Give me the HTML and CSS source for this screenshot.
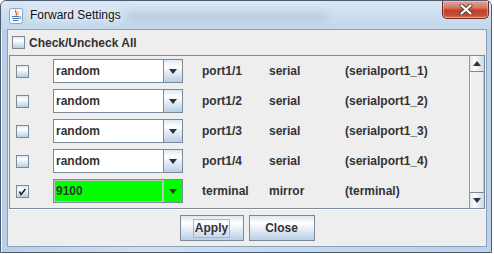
FILE: index.html
```html
<!DOCTYPE html>
<html lang="en">
<head>
    <meta charset="UTF-8">
    <title>Forward Settings</title>
    <link rel="stylesheet" href="styles.css">
</head>
<body>
    <div class="window">
        <!-- 标题栏 -->
        <div class="titlebar">
            <svg class="app-icon" width="14" height="16" viewBox="0 0 14 16">
                <rect x="0.5" y="0.5" width="13" height="15" rx="2" fill="#f4f8fc" stroke="#8ea6c0"/>
                <path d="M7 2 C5 4 9 5 7 7.5" fill="none" stroke="#e0622a" stroke-width="1.3"/>
                <path d="M9 3.5 C8 5 10 5.5 8.5 7" fill="none" stroke="#e88a3a" stroke-width="1"/>
                <path d="M3 8.5 H10.5 M3.5 10.5 H10 M4 12.5 H9.5" stroke="#4a78b0" stroke-width="1"/>
                <path d="M10.5 8.5 C12.5 8.5 12.5 11 10 11" fill="none" stroke="#4a78b0" stroke-width="0.9"/>
            </svg>
            <span class="title-text">Forward Settings</span>
            <div class="title-blur"></div>
            <div class="close-btn">
                <svg width="14" height="11" viewBox="0 0 14 11">
                    <path d="M2.5 1.5 L11.5 9.5 M11.5 1.5 L2.5 9.5" stroke="#5a3a36" stroke-width="4" stroke-linecap="round"/>
                    <path d="M2.5 1.5 L11.5 9.5 M11.5 1.5 L2.5 9.5" stroke="#ffffff" stroke-width="2.2" stroke-linecap="round"/>
                </svg>
            </div>
        </div>

        <div class="client">
            <div class="check-all">
                <span class="cb"></span>
                <span>Check/Uncheck All</span>
            </div>

            <div class="scrollpane">
                <div class="rows">
                    <div class="row">
                        <span class="cb"></span>
                        <div class="combo"><span class="combo-text">random</span><span class="combo-btn"><i class="arrow-down"></i></span></div>
                        <span>port1/1</span><span>serial</span><span>(serialport1_1)</span>
                    </div>
                    <div class="row">
                        <span class="cb"></span>
                        <div class="combo"><span class="combo-text">random</span><span class="combo-btn"><i class="arrow-down"></i></span></div>
                        <span>port1/2</span><span>serial</span><span>(serialport1_2)</span>
                    </div>
                    <div class="row">
                        <span class="cb"></span>
                        <div class="combo"><span class="combo-text">random</span><span class="combo-btn"><i class="arrow-down"></i></span></div>
                        <span>port1/3</span><span>serial</span><span>(serialport1_3)</span>
                    </div>
                    <div class="row">
                        <span class="cb"></span>
                        <div class="combo"><span class="combo-text">random</span><span class="combo-btn"><i class="arrow-down"></i></span></div>
                        <span>port1/4</span><span>serial</span><span>(serialport1_4)</span>
                    </div>
                    <div class="row">
                        <span class="cb checked">
                            <svg width="11" height="11" viewBox="0 0 11 11">
                                <path d="M2.5 5.5 L4 8.5 L8.5 3" fill="none" stroke="#222" stroke-width="1.6"/>
                            </svg>
                        </span>
                        <div class="combo green"><span class="combo-text">9100</span><span class="combo-btn"><i class="arrow-down"></i></span></div>
                        <span>terminal</span><span>mirror</span><span>(terminal)</span>
                    </div>
                </div>
                <!-- 滚动条 -->
                <div class="vscroll">
                    <div class="sbtn up"><i class="arrow-up"></i></div>
                    <div class="track"></div>
                    <div class="sbtn down"><i class="arrow-down"></i></div>
                </div>
            </div>

            <div class="actions">
                <button class="btn apply"><span class="focus">Apply</span></button>
                <button class="btn close">Close</button>
            </div>
        </div>
    </div>
</body>
</html>
```

FILE: styles.css
```css
/* 页面基础 */
body {
    margin: 0;
    background: #ffffff;
    font-family: "Liberation Sans", Arial, sans-serif;
}
/* 窗口外框 (Aero) */
.window {
    width: 492px;
    height: 253px;
    box-sizing: border-box;
    border: 1px solid #4b5b70;
    border-radius: 6px 6px 0 0;
    padding: 0 4px 5px 6px;
    display: flex;
    flex-direction: column;
    background: linear-gradient(90deg, #b9cfe8 0%, #cfe0f2 30%, #c4d8ee 60%, #bcd2ea 100%);
    box-shadow: inset 1px 1px 0 rgba(255,255,255,0.7);
}
/* 标题栏 */
.titlebar {
    height: 28px;
    margin: 0 -4px 0 -6px;
    display: flex;
    align-items: center;
    background: linear-gradient(180deg, #dbe8f5 0%, #cadcf0 60%, #c3d7ec 100%);
    border-radius: 5px 5px 0 0;
}
.app-icon {
    margin-left: 8px;
    margin-top: 1px;
}
.title-text {
    margin-left: 7px;
    font-size: 12px;
    color: #111;
    text-shadow: 0 0 6px #fff, 0 0 10px #fff;
}
.title-blur {
    width: 200px;
    height: 7px;
    margin-left: 6px;
    margin-top: 2px;
    background: rgba(95, 115, 145, 0.2);
    filter: blur(4px);
}
/* 关闭按钮 */
.close-btn {
    margin-left: auto;
    margin-right: 2px;
    align-self: flex-start;
    width: 45px;
    height: 17px;
    border: 1px solid #6e3026;
    border-top: none;
    border-radius: 0 0 5px 5px;
    background: linear-gradient(180deg, #e6a496 0%, #d47660 40%, #c0402a 55%, #c74e34 85%, #da7a5e 100%);
    box-shadow: inset 0 0 0 1px rgba(255,220,210,0.45);
    display: flex;
    align-items: center;
    justify-content: center;
}
/* 客户区 */
.client {
    height: 218px;
    box-sizing: border-box;
    border: 1px solid #8da2b9;
    background: #eeeeee;
    display: flex;
    flex-direction: column;
    color: #333333;
    font-size: 12px;
    font-weight: bold;
}
.check-all {
    height: 25px;
    padding-left: 4px;
    display: flex;
    align-items: center;
    gap: 4px;
}
/* 复选框 */
.cb {
    width: 13px;
    height: 13px;
    box-sizing: border-box;
    border: 1px solid #7a8a99;
    background: linear-gradient(180deg, #dde8f3 0%, #ffffff 30%, #b8cfe5 100%);
    display: flex;
    align-items: center;
    justify-content: center;
}
/* 表格区域 */
.scrollpane {
    height: 154px;
    margin: 0 1px;
    box-sizing: border-box;
    border: 1px solid #7a8a99;
    display: flex;
}
.rows {
    flex: 1;
}
.row {
    height: 30px;
    padding-left: 6px;
    display: grid;
    grid-template-columns: 37px 149px 67px 76px 1fr;
    align-items: center;
}
/* 下拉框 */
.combo {
    width: 130px;
    height: 24px;
    box-sizing: border-box;
    border: 1px solid #7a8a99;
    display: flex;
}
.combo-text {
    flex: 1;
    background: #ffffff;
    padding-left: 2px;
    line-height: 22px;
}
.combo-btn {
    width: 18px;
    border-left: 1px solid #7a8a99;
    background: linear-gradient(180deg, #dde8f3 0%, #ffffff 30%, #b8cfe5 100%);
    display: flex;
    align-items: center;
    justify-content: center;
}
.combo.green .combo-text {
    background: #00ff00;
    box-shadow: inset 0 0 0 1px #b8c8b8;
}
.combo.green .combo-btn {
    background: #00ff00;
    border-left-color: #b8c8b8;
}
.arrow-down {
    width: 0;
    height: 0;
    border-left: 4.5px solid transparent;
    border-right: 4.5px solid transparent;
    border-top: 5px solid #333;
}
.arrow-up {
    width: 0;
    height: 0;
    border-left: 4.5px solid transparent;
    border-right: 4.5px solid transparent;
    border-bottom: 5px solid #333;
}
/* 滚动条 */
.vscroll {
    width: 15px;
    box-sizing: border-box;
    border-left: 1px solid #8a9aaa;
    display: flex;
    flex-direction: column;
}
.sbtn {
    height: 16px;
    box-sizing: border-box;
    background: linear-gradient(90deg, #dde8f3 0%, #ffffff 30%, #c8d8e8 100%);
    display: flex;
    align-items: center;
    justify-content: center;
}
.sbtn.up {
    border-bottom: 1px solid #7a8a99;
}
.sbtn.down {
    border-top: 1px solid #7a8a99;
}
.track {
    flex: 1;
    background: #eeeeee;
    border-left: 1px solid #ffffff;
    border-right: 1px solid #b8c6d4;
}
/* 底部按钮 */
.actions {
    flex: 1;
    padding-top: 6px;
    display: flex;
    justify-content: center;
    align-items: flex-start;
    gap: 5px;
    border-top: 1px solid #ffffff;
}
.btn {
    height: 26px;
    padding: 0;
    border: 1px solid #7a8a99;
    background: linear-gradient(180deg, #dde8f3 0%, #ffffff 30%, #b8cfe5 100%);
    font-family: "Liberation Sans", Arial, sans-serif;
    font-size: 12px;
    font-weight: bold;
    color: #333333;
    display: flex;
    align-items: center;
    justify-content: center;
}
.btn.apply {
    width: 64px;
    margin-top: -1px;
}
.btn.close {
    width: 66px;
    margin-top: -1px;
}
.focus {
    border: 1px solid #a3b8cc;
    padding: 2px 1px;
    line-height: 13px;
}
```
